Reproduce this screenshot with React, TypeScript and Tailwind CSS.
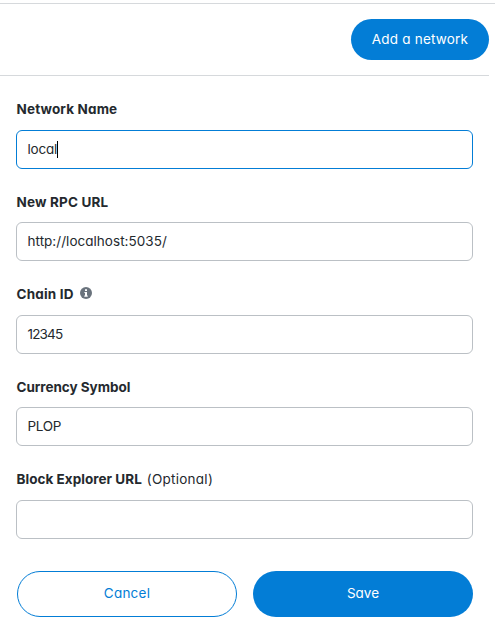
import type { ReactNode } from "react";

function InfoIcon() {
  return (
    <svg viewBox="0 0 12 12" className="mb-0.5 ml-1.5 size-3 shrink-0">
      <circle cx="6" cy="6" r="6" fill="#6a737d" />
      <path d="M5 2.2h2v1.7H5zM4.4 4.9H7v3.7h.7v1.1H4.3V8.6H5V6h-.6z" fill="#fff" />
    </svg>
  );
}

type FieldProps = {
  label: string;
  labelTracking: string;
  value?: string;
  tracking?: string;
  focused?: boolean;
  extra?: ReactNode;
  spacing: string;
};

function Field({ label, labelTracking, value, tracking = "", focused, extra, spacing }: FieldProps) {
  return (
    <div className={spacing}>
      <div className="flex h-[22px] items-center whitespace-nowrap pl-[0.5px]">
        <span className={`font-bold ${labelTracking}`}>{label}</span>
        {extra}
      </div>
      <div
        className={`flex h-[39px] items-center rounded-[6px] border pb-px pl-[10.5px] ${
          focused ? "border-[#037dd6]" : "border-[#bbc0c5]"
        }`}
      >
        <span className={tracking}>{value}</span>
        {focused && <span className="h-[17px] w-px bg-black" />}
      </div>
    </div>
  );
}

export default function App() {
  return (
    <div className="h-[632px] w-[495px] overflow-hidden bg-white pt-[3px] font-['Inter','Liberation_Sans',sans-serif] text-[13.5px] leading-[22px] text-[#24292e] [font-feature-settings:'cv11']">
      <div className="border-t border-[#d6d9dc]">
        <div className="mr-1.5 flex h-[72px] items-start justify-end border-b border-[#d6d9dc] pt-[15px]">
          <button className="h-[41px] w-[138px] rounded-full bg-[#037dd6] pb-px tracking-[0.2px] text-white">
            Add a network
          </button>
        </div>
      </div>
      <form className="ml-4 w-[457px] pt-[22px]">
        <Field
          label="Network Name"
          labelTracking="tracking-[0.15px]"
          value="local"
          tracking="tracking-[-0.2px]"
          focused
          spacing="space-y-2.5"
        />
        <Field
          label="New RPC URL"
          labelTracking="tracking-[0.16px]"
          value="http://localhost:5035/"
          tracking="tracking-[0.03px]"
          spacing="mt-[22px] space-y-[9px]"
        />
        <Field
          label="Chain ID"
          labelTracking="tracking-[0.2px]"
          value="12345"
          tracking="tracking-[-0.85px]"
          extra={<InfoIcon />}
          spacing="mt-[22px] space-y-2.5"
        />
        <Field
          label="Currency Symbol"
          labelTracking="tracking-[-0.04px]"
          value="PLOP"
          tracking="tracking-[-0.35px]"
          spacing="mt-[22px] space-y-[9px]"
        />
        <Field
          label="Block Explorer URL"
          labelTracking="tracking-[0.04px]"
          extra={<span className="ml-[5px] tracking-[0.25px]">(Optional)</span>}
          spacing="mt-[22px] space-y-2.5"
        />
        <div className="mt-8 flex gap-4 pl-px">
          <button
            type="button"
            className="h-[46px] w-[220px] rounded-full border border-[#037dd6] pb-[3px] tracking-[0.25px] text-[#037dd6]"
          >
            Cancel
          </button>
          <button type="button" className="h-[46px] w-[220px] rounded-full bg-[#037dd6] pb-[3px] text-white">
            Save
          </button>
        </div>
      </form>
    </div>
  );
}
